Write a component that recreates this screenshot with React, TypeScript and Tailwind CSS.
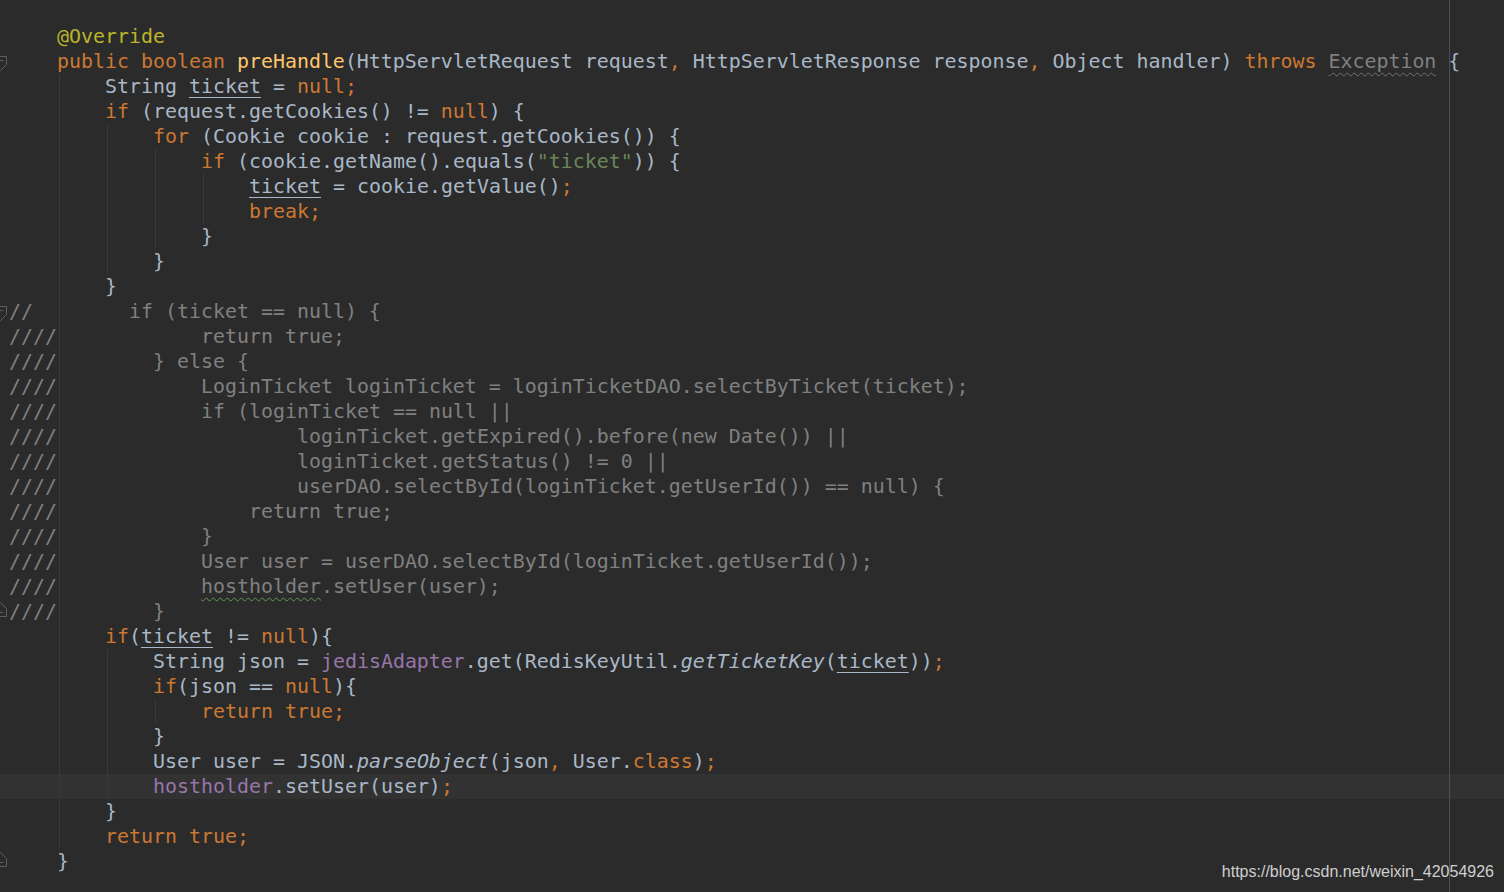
type Seg = [string, string];
type Line = { pre?: string; indent: number; segs: Seg[]; fold?: "open" | "close" };

const T = "t";
const K = "k";
const C = "c";

const cls: Record<string, string> = {
  t: "text-[#a9b7c6]",
  k: "text-[#cc7832]",
  c: "text-[#808080]",
  a: "text-[#bbb529]",
  m: "text-[#ffc66d]",
  s: "text-[#6a8759]",
  f: "text-[#9876aa]",
  i: "text-[#a9b7c6] italic",
  u: "text-[#a9b7c6] underline decoration-1 underline-offset-[4px] decoration-[#a9b7c6]",
  x: "text-[#808080] underline decoration-wavy decoration-1 underline-offset-[4px] decoration-[#707070]",
  h: "text-[#808080] underline decoration-wavy decoration-1 underline-offset-[4px] decoration-[#629755]",
};

const cm = (indent: number, s: string): Line => ({ pre: "////", indent, segs: [[C, s]] });

const lines: Line[] = [
  { indent: 4, segs: [["a", "@Override"]] },
  {
    indent: 4,
    fold: "open",
    segs: [
      [K, "public boolean "],
      ["m", "preHandle"],
      [T, "(HttpServletRequest request"],
      [K, ","],
      [T, " HttpServletResponse response"],
      [K, ","],
      [T, " Object handler) "],
      [K, "throws "],
      ["x", "Exception"],
      [T, " {"],
    ],
  },
  { indent: 8, segs: [[T, "String "], ["u", "ticket"], [T, " = "], [K, "null;"]] },
  { indent: 8, segs: [[K, "if"], [T, " (request.getCookies() != "], [K, "null"], [T, ") {"]] },
  { indent: 12, segs: [[K, "for"], [T, " (Cookie cookie : request.getCookies()) {"]] },
  { indent: 16, segs: [[K, "if"], [T, " (cookie.getName().equals("], ["s", '"ticket"'], [T, ")) {"]] },
  { indent: 20, segs: [["u", "ticket"], [T, " = cookie.getValue()"], [K, ";"]] },
  { indent: 20, segs: [[K, "break;"]] },
  { indent: 16, segs: [[T, "}"]] },
  { indent: 12, segs: [[T, "}"]] },
  { indent: 8, segs: [[T, "}"]] },
  { pre: "//", indent: 8, fold: "open", segs: [[C, "  if (ticket == null) {"]] },
  cm(16, "return true;"),
  cm(12, "} else {"),
  cm(16, "LoginTicket loginTicket = loginTicketDAO.selectByTicket(ticket);"),
  cm(16, "if (loginTicket == null ||"),
  cm(24, "loginTicket.getExpired().before(new Date()) ||"),
  cm(24, "loginTicket.getStatus() != 0 ||"),
  cm(24, "userDAO.selectById(loginTicket.getUserId()) == null) {"),
  cm(20, "return true;"),
  cm(16, "}"),
  cm(16, "User user = userDAO.selectById(loginTicket.getUserId());"),
  { pre: "////", indent: 16, segs: [["h", "hostholder"], [C, ".setUser(user);"]] },
  { ...cm(12, "}"), fold: "close" },
  { indent: 8, segs: [[K, "if"], [T, "("], ["u", "ticket"], [T, " != "], [K, "null"], [T, "){"]] },
  {
    indent: 12,
    segs: [
      [T, "String json = "],
      ["f", "jedisAdapter"],
      [T, ".get(RedisKeyUtil."],
      ["i", "getTicketKey"],
      [T, "("],
      ["u", "ticket"],
      [T, "))"],
      [K, ";"],
    ],
  },
  { indent: 12, segs: [[K, "if"], [T, "(json == "], [K, "null"], [T, "){"]] },
  { indent: 16, segs: [[K, "return true;"]] },
  { indent: 12, segs: [[T, "}"]] },
  {
    indent: 12,
    segs: [
      [T, "User user = JSON."],
      ["i", "parseObject"],
      [T, "(json"],
      [K, ","],
      [T, " User."],
      [K, "class"],
      [T, ")"],
      [K, ";"],
    ],
  },
  { indent: 12, segs: [["f", "hostholder"], [T, ".setUser(user)"], [K, ";"]] },
  { indent: 8, segs: [[T, "}"]] },
  { indent: 8, segs: [[K, "return true;"]] },
  { indent: 4, fold: "close", segs: [[T, "}"]] },
];

// indent guides: [column, first line, last line]
const guides: [number, number, number][] = [
  [4, 2, 32],
  [8, 4, 9],
  [8, 25, 30],
  [12, 5, 8],
  [12, 27, 27],
  [16, 6, 7],
];

const hasGuide = (col: number, i: number) => guides.some(([c, a, b]) => c === col && i >= a && i <= b);

function Fold({ kind }: { kind: "open" | "close" }) {
  return (
    <svg className={`-ml-[6px] shrink-0 ${kind === "open" ? "mt-[7px]" : "mt-[3px]"}`} width="13" height="16" viewBox="-6.5 -0.5 13 16">
      {kind === "open" ? (
        <>
          <path d="M-6 0 H6 V8 L0 14 L-6 8 Z" fill="#2b2b2b" stroke="#5e5e5e" strokeWidth="1" />
          <path d="M-3 4 H3" stroke="#5e5e5e" strokeWidth="1" />
        </>
      ) : (
        <>
          <path d="M0 0 L6 6 V14 H-6 V6 Z" fill="#2b2b2b" stroke="#5e5e5e" strokeWidth="1" />
          <path d="M-3 10 H3" stroke="#5e5e5e" strokeWidth="1" />
        </>
      )}
    </svg>
  );
}

function CodeLine({ line, index }: { line: Line; index: number }) {
  const units = Math.floor(line.indent / 4);
  return (
    <div className={`flex h-[25px] whitespace-pre leading-[25px] ${index === 30 ? "bg-[#323232]" : ""}`}>
      <div className="flex w-[9px] shrink-0 items-start overflow-visible">{line.fold && <Fold kind={line.fold} />}</div>
      {Array.from({ length: units }, (_, u) => (
        <span key={u} className="flex h-[25px] w-[48px] shrink-0">
          {u === 0 && line.pre ? (
            <span className="text-[#808080]">{line.pre}</span>
          ) : hasGuide(u * 4, index) ? (
            <span className="ml-[2px] h-[25px] w-px bg-[#393939]" />
          ) : null}
        </span>
      ))}
      <span>
        {line.segs.map(([c, text], j) => (
          <span key={j} className={cls[c]}>
            {text}
          </span>
        ))}
      </span>
    </div>
  );
}

export default function App() {
  return (
    <div className="relative h-[892px] w-full overflow-hidden bg-[#2b2b2b]">
      <div className="flex flex-col pt-[24px] font-['DejaVu_Sans_Mono','Liberation_Mono',monospace] text-[19.93px]">
        {lines.map((line, i) => (
          <CodeLine key={i} line={line} index={i} />
        ))}
      </div>

      {/* right margin guide */}
      <div className="absolute left-[1449px] top-0 h-full w-px bg-[#4f4f4f]" />

      <div className="absolute bottom-[10px] right-[10px] font-['Liberation_Sans',Arial,sans-serif] text-[16px] leading-[20px] text-[#cfcfcf]">
        https://blog.csdn.net/weixin_42054926
      </div>
    </div>
  );
}
